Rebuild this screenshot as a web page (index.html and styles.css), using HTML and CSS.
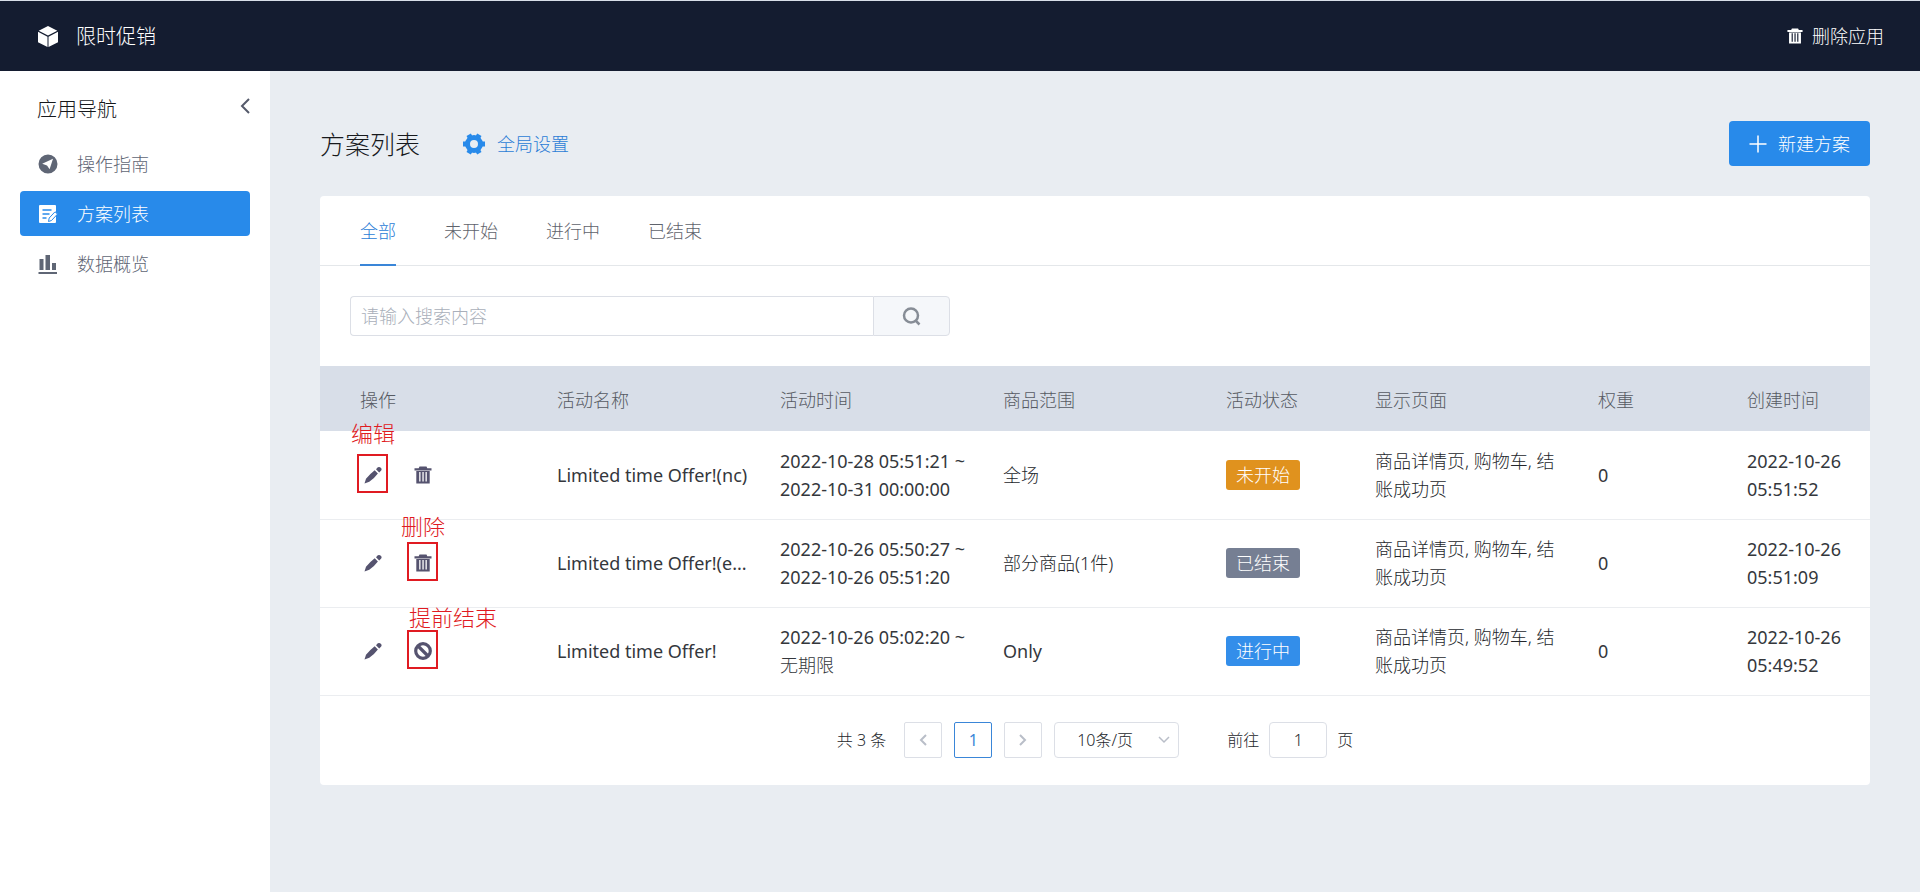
FILE: index.html
```html
<!DOCTYPE html>
<html lang="zh-CN">
<head>
<meta charset="utf-8">
<meta name="viewport" content="width=device-width, initial-scale=1">
<title>限时促销</title>
<link rel="stylesheet" href="styles.css">
</head>
<body>
<svg class="sprite" aria-hidden="true">
  <symbol id="i-trash" viewBox="0 0 18 18"><path fill-rule="evenodd" d="M5.500 .5h7l.8 1.700H17.500v2.300H.5V2.200h4.200zM2.300 5h13.400v12.500H2.300zM5.200 6v9.500h1.300V6zM8.400 6v9.500h1.300V6zM11.500 6v9.500h1.300V6z"/></symbol>
  <symbol id="i-pencil" viewBox="0 0 18 18"><path d="M.5 17.500l1.500-4.700Q6.500 7.500 10.700 4.300l3.200 3.100Q10.500 12 5.300 15.800zM12 3.200l1.800-1.900q1.600-1 3 .4t.4 2.900l-2 2z"/></symbol>
  <symbol id="i-ban" viewBox="0 0 18 18"><circle cx="9" cy="9" r="7.300" fill="none" stroke="currentColor" stroke-width="3.200"/><path d="M4 4l10 10" stroke="currentColor" stroke-width="3.200"/></symbol>
</svg>
<header class="topbar">
  <div class="brand">
    <svg class="cube" viewBox="0 0 20 21" aria-hidden="true"><path d="M10 0l9.300 4.700L10 9.600.7 4.700zM0 5.700l9.500 5V21L0 16.300zM20 5.700l-9.500 5V21l9.500-4.700z"/></svg>
    <span>限时促销</span>
  </div>
  <button class="remove-app" type="button"><svg class="icon-16" aria-hidden="true"><use href="#i-trash"/></svg>删除应用</button>
</header>
<div class="layout">
  <aside class="sidebar">
    <div class="sidebar-head">
      <h2>应用导航</h2>
      <button class="collapse" type="button" aria-label="收起"><svg viewBox="0 0 10 16" aria-hidden="true"><path d="M9 1L2 8l7 7"/></svg></button>
    </div>
    <nav>
      <a href="#guide"><svg class="icon-20" viewBox="0 0 20 20" aria-hidden="true"><path fill-rule="evenodd" d="M10 0.500a9.500 9.500 0 1 0 0 19a9.500 9.500 0 0 0 0-19zM15 4.800L11.600 15.200 9 11.400 4.200 9.800z"/></svg>操作指南</a>
      <a class="current" href="#plans"><svg class="icon-20" viewBox="0 0 20 20" aria-hidden="true"><path d="M2 1h15a1 1 0 0 1 1 1v16a1 1 0 0 1-1 1H2a1 1 0 0 1-1-1V2a1 1 0 0 1 1-1z"/><path class="cut" d="M4.500 6h9M4.500 10h7M4.500 14h4"/><path class="pen" d="M10.500 17.500l.7-3.500L17 7.800l2.500 2.300-6 6.400z"/></svg>方案列表</a>
      <a href="#data"><svg class="icon-20" viewBox="0 0 20 20" aria-hidden="true"><path d="M1.500 5h4v11h-4zM7.500 1h4.500v15H7.500zM14 9h4v7h-4zM.5 18h18.500v2H.5z"/></svg>数据概览</a>
    </nav>
  </aside>
  <main>
    <div class="page-head">
      <h1>方案列表</h1>
      <a class="settings" href="#settings"><svg class="gear" viewBox="0 0 22 22" aria-hidden="true"><circle cx="11" cy="11" r="6.500"/><path d="M3.500 11H0M22 11h-3.500M7.250 4.500L5.700 1.700M14.750 17.500l1.600 2.800M7.250 17.500l-1.600 2.800M14.750 4.500l1.600-2.800"/></svg>全局设置</a>
      <button class="create" type="button"><svg class="icon-18" viewBox="0 0 18 18" aria-hidden="true"><path d="M9 .5v17M.5 9h17"/></svg>新建方案</button>
    </div>
    <section class="card">
      <div class="tabs" role="tablist">
        <button class="active" type="button" role="tab" aria-selected="true">全部</button>
        <button type="button" role="tab">未开始</button>
        <button type="button" role="tab">进行中</button>
        <button type="button" role="tab">已结束</button>
      </div>
      <form class="search">
        <input type="text" aria-label="搜索" placeholder="请输入搜索内容">
        <button type="button" aria-label="搜索"><svg class="icon-20" viewBox="0 0 20 20" aria-hidden="true"><circle cx="9" cy="9.500" r="7"/><path d="M13.500 14.500l4 4"/></svg></button>
      </form>
      <table>
        <colgroup><col class="c-action"><col class="c-wide"><col class="c-wide"><col class="c-wide"><col class="c-small"><col class="c-wide"><col class="c-small"><col class="c-last"></colgroup>
        <thead><tr><th>操作</th><th>活动名称</th><th>活动时间</th><th>商品范围</th><th>活动状态</th><th>显示页面</th><th>权重</th><th>创建时间</th></tr></thead>
        <tbody>
          <tr>
            <td><div class="actions"><button type="button" aria-label="编辑"><svg class="icon-18" aria-hidden="true"><use href="#i-pencil"/></svg><span class="mark"><span class="mark-text high">编辑</span></span></button><button type="button" aria-label="删除"><svg class="icon-18" aria-hidden="true"><use href="#i-trash"/></svg></button></div></td>
            <td class="latin">Limited time Offer!(nc)</td>
            <td class="latin">2022-10-28 05:51:21 ~<br>2022-10-31 00:00:00</td>
            <td>全场</td>
            <td><span class="tag pending">未开始</span></td>
            <td>商品详情页, 购物车, 结账成功页</td>
            <td class="latin">0</td>
            <td class="latin">2022-10-26<br>05:51:52</td>
          </tr>
          <tr>
            <td><div class="actions"><button type="button" aria-label="编辑"><svg class="icon-18" aria-hidden="true"><use href="#i-pencil"/></svg></button><button type="button" aria-label="删除"><svg class="icon-18" aria-hidden="true"><use href="#i-trash"/></svg><span class="mark"><span class="mark-text">删除</span></span></button></div></td>
            <td class="latin">Limited time Offer!(e...</td>
            <td class="latin">2022-10-26 05:50:27 ~<br>2022-10-26 05:51:20</td>
            <td>部分商品(1件)</td>
            <td><span class="tag ended">已结束</span></td>
            <td>商品详情页, 购物车, 结账成功页</td>
            <td class="latin">0</td>
            <td class="latin">2022-10-26<br>05:51:09</td>
          </tr>
          <tr>
            <td><div class="actions"><button type="button" aria-label="编辑"><svg class="icon-18" aria-hidden="true"><use href="#i-pencil"/></svg></button><button type="button" aria-label="提前结束"><svg class="icon-18" aria-hidden="true"><use href="#i-ban"/></svg><span class="mark"><span class="mark-text low">提前结束</span></span></button></div></td>
            <td class="latin">Limited time Offer!</td>
            <td class="latin">2022-10-26 05:02:20 ~<br><span class="open-end">无期限</span></td>
            <td class="latin">Only</td>
            <td><span class="tag running">进行中</span></td>
            <td>商品详情页, 购物车, 结账成功页</td>
            <td class="latin">0</td>
            <td class="latin">2022-10-26<br>05:49:52</td>
          </tr>
        </tbody>
      </table>
      <div class="pager">
        <span class="total">共 3 条</span>
        <button type="button" aria-label="上一页" disabled><svg viewBox="0 0 8 12" aria-hidden="true"><path d="M7 1L2 6l5 5"/></svg></button>
        <button class="on" type="button">1</button>
        <button type="button" aria-label="下一页" disabled><svg viewBox="0 0 8 12" aria-hidden="true"><path d="M1 1l5 5-5 5"/></svg></button>
        <div class="size">
          <select aria-label="每页条数"><option>10条/页</option></select>
          <svg viewBox="0 0 12 8" aria-hidden="true"><path d="M1 1l5 5 5-5"/></svg>
        </div>
        <label class="jump">前往<input type="text" value="1">页</label>
      </div>
    </section>
  </main>
</div>
</body>
</html>
```
FILE: styles.css
```css
* { box-sizing: border-box; }
body {
  margin: 0;
  min-height: 100vh;
  display: flex;
  flex-direction: column;
  background: #e9edf2;
  color: #24272c;
  font: 300 18px/28px "Noto Sans", "Noto Sans CJK SC", sans-serif;
}
button, input, select { font: inherit; color: inherit; margin: 0; }
button { padding: 0; border: 0; background: none; cursor: pointer; }
a { text-decoration: none; color: inherit; }
h1, h2 { margin: 0; font-weight: 300; }
svg { display: block; flex: none; fill: currentColor; }
.sprite { display: none; }
.icon-16 { width: 16px; height: 16px; }
.icon-18 { width: 18px; height: 18px; }
.icon-20 { width: 20px; height: 20px; }

.topbar {
  display: flex;
  align-items: center;
  justify-content: space-between;
  height: 71px;
  padding: 0 36px 0 38px;
  border-top: 1px solid #d8dee8;
  background: #141c30;
  color: #fff;
}
.brand { display: flex; align-items: center; gap: 18px; font-size: 20px; line-height: 30px; }
.brand span { padding-top: 2px; }
.cube { width: 20px; height: 21px; }
.remove-app { display: flex; align-items: center; gap: 9px; }

.layout { flex: 1; display: flex; }
.sidebar { flex: none; width: 270px; padding: 20px; background: #fff; }
.sidebar-head {
  display: flex;
  justify-content: space-between;
  height: 50px;
  padding: 4px 0 0 17px;
  color: #17191d;
}
.sidebar-head h2 { font-size: 20px; line-height: 30px; }
.collapse { width: 10px; height: 22px; }
.collapse svg { width: 10px; height: 16px; fill: none; stroke: #555a6b; stroke-width: 2; }
.sidebar nav { display: grid; gap: 5px; }
.sidebar nav a {
  display: flex;
  align-items: center;
  gap: 19px;
  height: 45px;
  padding: 0 18px;
  border-radius: 4px;
  color: #5f6675;
}
.sidebar nav .current { background: #288aea; color: #fff; }
.cut { fill: none; stroke: #288aea; stroke-width: 1.5; }
.pen { fill: #fff; stroke: #288aea; stroke-width: 1; }

main { flex: 1; min-width: 0; padding: 50px; }
.page-head { display: flex; align-items: center; height: 45px; margin-bottom: 30px; }
h1 { font-size: 25px; line-height: 36px; color: #17191d; }
.settings { display: flex; align-items: center; gap: 12px; margin-left: 43px; color: #2b7cd6; }
.gear { width: 22px; height: 22px; fill: none; stroke: #288aea; stroke-width: 5; }
.create {
  display: flex;
  align-items: center;
  justify-content: center;
  gap: 11px;
  width: 141px;
  height: 45px;
  margin-left: auto;
  border-radius: 4px;
  background: #288aea;
  color: #fff;
}
.create svg { stroke: currentColor; stroke-width: 1.5; }

.card { border-radius: 4px; background: #fff; }
.tabs { display: flex; gap: 48px; height: 70px; padding: 0 40px; border-bottom: 1px solid #e4e7ea; }
.tabs button { height: 70px; padding-top: 2px; border-bottom: 2px solid transparent; color: #5f636c; }
.tabs .active { border-color: #3a86d8; color: #2b7cd6; }
.search { display: flex; width: 600px; height: 40px; margin: 30px; }
.search input {
  flex: 1;
  min-width: 0;
  padding: 0 10px;
  border: 1px solid #dcdfe6;
  border-right: 0;
  border-radius: 4px 0 0 4px;
  background: #fff;
}
input::placeholder { color: #a9afba; opacity: 1; }
.search button {
  display: grid;
  place-items: center;
  width: 77px;
  border: 1px solid #dcdfe6;
  border-radius: 0 4px 4px 0;
  background: #f5f7fa;
  color: #878d96;
}
.search svg { fill: none; stroke: currentColor; stroke-width: 2.5; }

table { width: 100%; table-layout: fixed; border-collapse: collapse; }
.c-action { width: 225px; }
.c-wide { width: 223px; }
.c-small { width: 149px; }
.c-last { width: 135px; }
th { height: 65px; padding: 2px 18px 0 12px; background: #d8dee8; color: #565a62; font-weight: 300; text-align: left; }
td { height: 88px; padding: 0 18px 0 12px; border-bottom: 1px solid #ebedf0; }
th:first-child, td:first-child { padding-left: 40px; }
.latin { white-space: nowrap; font-weight: 400; color: #34373c; }
.open-end { font-weight: 300; }
.actions { display: flex; gap: 24px; color: #55536f; }
.actions button { position: relative; display: grid; place-items: center; width: 26px; height: 26px; }
.mark { position: absolute; inset: -8px -2px -5px -3px; border: 2px solid #e01b22; }
.mark-text {
  position: absolute;
  left: -8px;
  bottom: 100%;
  color: #e01b22;
  font-size: 22px;
  line-height: 36px;
  white-space: nowrap;
}
.mark-text.high { line-height: 46px; }
.mark-text.low { left: 0; line-height: 30px; }
.tag {
  display: inline-block;
  padding: 0 10px;
  border-radius: 3px;
  color: #fff;
  line-height: 30px;
}
.pending { background: #e0921e; }
.ended { background: #767f93; }
.running { background: #338eea; }

.pager { display: flex; align-items: center; justify-content: center; gap: 12px; height: 89px; font-size: 16px; }
.total { margin-right: 6px; word-spacing: normal; }
.pager button { display: grid; place-items: center; width: 38px; height: 36px; border: 1px solid #dcdfe6; border-radius: 2px; }
.pager svg { fill: none; stroke: #b9bec8; stroke-width: 1.5; }
.pager button svg { width: 8px; height: 12px; stroke-width: 2; }
.pager .on { border-color: #3a86d8; color: #3a86d8; font-weight: 400; }
.size { position: relative; }
.size select {
  width: 125px;
  height: 36px;
  padding: 0 22px;
  border: 1px solid #dcdfe6;
  border-radius: 4px;
  background: #fff;
  appearance: none;
}
.size svg { position: absolute; right: 9px; top: 14px; width: 12px; height: 8px; }
.jump { display: flex; align-items: center; gap: 10px; margin-left: 36px; }
.jump input { width: 58px; height: 36px; padding: 0; border: 1px solid #dcdfe6; border-radius: 4px; text-align: center; }
```
